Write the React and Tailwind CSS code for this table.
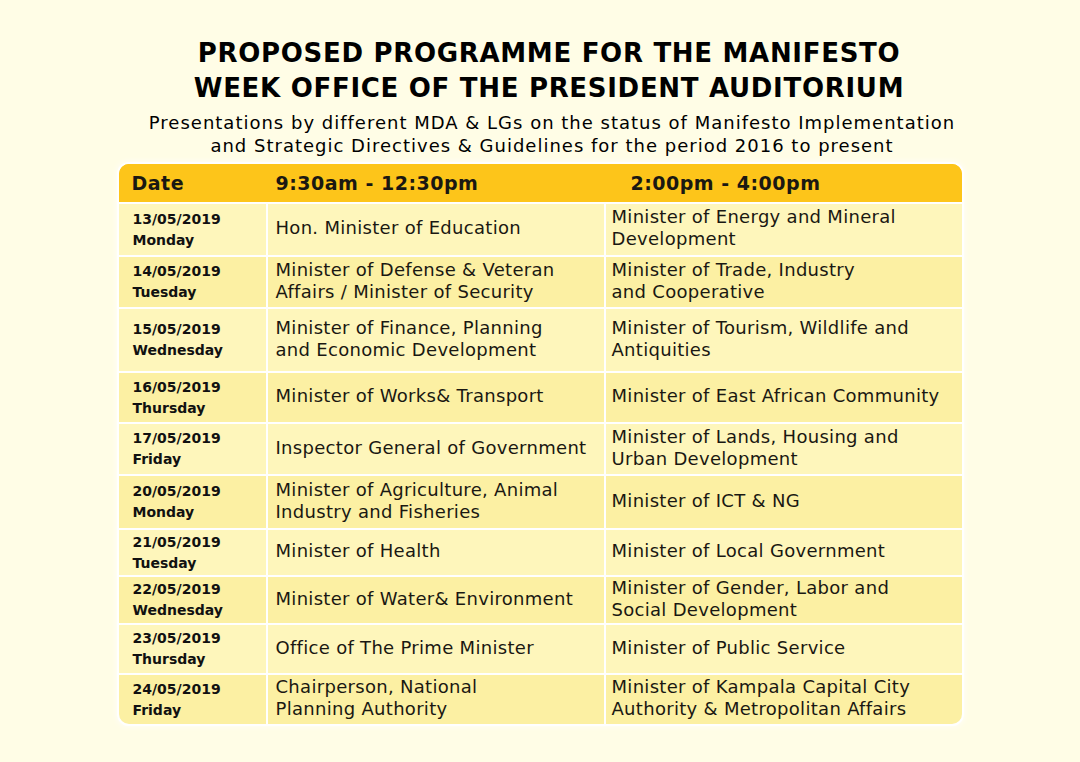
import React from 'react';

const ROWS = [
  { date: '13/05/2019', day: 'Monday', am: ['Hon. Minister of Education'], pm: ['Minister of Energy and Mineral', 'Development'], h: 'h-[51px]' },
  { date: '14/05/2019', day: 'Tuesday', am: ['Minister of Defense & Veteran', 'Affairs / Minister of Security'], pm: ['Minister of Trade, Industry', 'and Cooperative'], h: 'h-[50px]' },
  { date: '15/05/2019', day: 'Wednesday', am: ['Minister of Finance, Planning', 'and Economic Development'], pm: ['Minister of Tourism, Wildlife and', 'Antiquities'], h: 'h-[62px]' },
  { date: '16/05/2019', day: 'Thursday', am: ['Minister of Works& Transport'], pm: ['Minister of East African Community'], h: 'h-[49px]' },
  { date: '17/05/2019', day: 'Friday', am: ['Inspector General of Government'], pm: ['Minister of Lands, Housing and', 'Urban Development'], h: 'h-[50px]' },
  { date: '20/05/2019', day: 'Monday', am: ['Minister of Agriculture, Animal', 'Industry and Fisheries'], pm: ['Minister of ICT & NG'], h: 'h-[52px]' },
  { date: '21/05/2019', day: 'Tuesday', am: ['Minister of Health'], pm: ['Minister of Local Government'], h: 'h-[45px]' },
  { date: '22/05/2019', day: 'Wednesday', am: ['Minister of Water& Environment'], pm: ['Minister of Gender, Labor and', 'Social Development'], h: 'h-[46px]' },
  { date: '23/05/2019', day: 'Thursday', am: ['Office of The Prime Minister'], pm: ['Minister of Public Service'], h: 'h-[48px]' },
  { date: '24/05/2019', day: 'Friday', am: ['Chairperson, National', 'Planning Authority'], pm: ['Minister of Kampala Capital City', 'Authority & Metropolitan Affairs'], h: 'h-[49px]' },
];

function Lines({ lines }) {
  return (
    <div className="flex flex-col -mt-[3px]">
      {lines.map((l) => (
        <span key={l} className="whitespace-nowrap">{l}</span>
      ))}
    </div>
  );
}

export default function App() {
  return (
    <div
      className="w-[1080px] h-[762px] bg-[#fffde6] flex flex-col items-center pt-[36px] text-[#1a1812] overflow-hidden"
      style={{ fontFamily: '"DejaVu Sans", "Liberation Sans", sans-serif' }}
    >
      {/* Title */}
      <h1 className="text-[26px] leading-[35px] font-bold text-center text-black tracking-[0.7px] ml-[18px]">
        <div className="whitespace-nowrap">PROPOSED PROGRAMME FOR THE MANIFESTO</div>
        <div className="whitespace-nowrap">WEEK OFFICE OF THE PRESIDENT AUDITORIUM</div>
      </h1>
      <div className="mt-[5px] text-[18px] leading-[23px] text-center tracking-[1px] ml-[24px] text-black">
        <div className="whitespace-nowrap">Presentations by different MDA &amp; LGs on the status of Manifesto Implementation</div>
        <div className="whitespace-nowrap">and Strategic Directives &amp; Guidelines for the period 2016 to present</div>
      </div>

      {/* Table */}
      <div className="mt-[5px] w-[847px] rounded-[12px] border-2 border-white bg-white flex flex-col gap-[2px] overflow-hidden shadow-[0_0_6px_rgba(255,255,255,0.9)]">
        <div className="flex h-[38px] gap-[2px] bg-[#fdc51a] font-bold text-[19px] tracking-[0.5px]">
          <div className="w-[147px] flex items-center pl-[13px] bg-[#fdc51a]">Date</div>
          <div className="w-[336px] flex items-center pl-[8px] bg-[#fdc51a]">9:30am - 12:30pm</div>
          <div className="flex-1 flex items-center pl-[25px] bg-[#fdc51a]">2:00pm - 4:00pm</div>
        </div>
        {ROWS.map((r, i) => {
          const bg = i % 2 === 0 ? 'bg-[#fef6bb]' : 'bg-[#fcf0a3]';
          return (
            <div key={r.date} className={`flex gap-[2px] ${r.h}`}>
              <div className={`w-[147px] flex flex-col justify-center pl-[14px] font-bold text-[14px] leading-[21px] text-[#111] ${bg}`}>
                <span>{r.date}</span>
                <span>{r.day}</span>
              </div>
              <div className={`w-[336px] flex items-center pl-[8px] text-[18px] leading-[22px] tracking-[0.3px] ${bg}`}>
                <Lines lines={r.am} />
              </div>
              <div className={`flex-1 flex items-center pl-[6px] text-[18px] leading-[22px] tracking-[0.3px] ${bg}`}>
                <Lines lines={r.pm} />
              </div>
            </div>
          );
        })}
      </div>
    </div>
  );
}
